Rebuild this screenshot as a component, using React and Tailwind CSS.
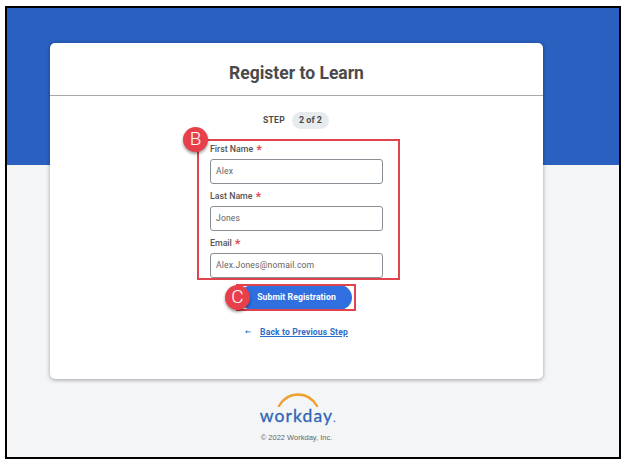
import React from 'react';

const Field = ({ label, value, className = '' }) => (
  <div className={className}>
    <label className="flex h-[13px] items-center pt-[2px] text-[8.8px] font-medium leading-none text-[#555]">
      {label}
      <span className="ml-[3px] text-[13px] leading-none text-[#de4b4f]">*</span>
    </label>
    <div className="mt-[4px] flex h-[25px] w-[173px] items-center rounded-[3px] border border-[#8a8f96] bg-white px-[5px] text-[8.6px] tracking-[0.15px] text-[#5f6368]">
      {value}
    </div>
  </div>
);

const App = () => {
  return (
    <div className="h-[463px] w-[625px] bg-white pl-[5px] pt-[6px] font-['Roboto',sans-serif]">
      <div className="h-[453px] w-[616px] border-2 border-black bg-[linear-gradient(#2a60bf_157px,#f4f5f7_157px)] pl-[43px] pt-[35px]">
        {/* Card */}
        <div className="relative h-[336px] w-[493px] rounded-[5px] bg-white shadow-[0_1px_4px_rgba(0,0,0,0.35)]">
          <div className="flex h-[53px] items-center justify-center border-b border-[#a9a9a9] pt-[8px] text-[17.5px] font-bold text-[#4a4a4a]">
            Register to Learn
          </div>

          <div className="flex h-[33px] items-center pl-[213px] pt-[16px]">
            <span className="text-[8.5px] font-bold tracking-[0.3px] text-[#4a4a4a]">STEP</span>
            <span className="ml-[7px] flex h-[17px] w-[37px] items-center justify-center rounded-full bg-[#e8ebee] text-[9px] font-bold text-[#4a4a4a]">
              2 of 2
            </span>
          </div>

          <div className="pl-[160px] pt-[13px]">
            <Field label="First Name" value="Alex" />
            <Field label="Last Name" value="Jones" className="mt-[5px]" />
            <Field label="Email" value="Alex.Jones@nomail.com" className="mt-[5px]" />

            <button className="ml-[30px] mt-[7px] flex h-[25px] w-[112px] items-center justify-center rounded-full bg-[#2f6fe0] pl-[1px] text-[8.6px] font-bold tracking-[0.1px] text-white">
              Submit Registration
            </button>

            <div className="ml-[35px] mt-[16px] flex items-center text-[8.6px] font-bold tracking-[0.15px] text-[#2f6cc9]">
              <span className="w-[15px] font-['DejaVu_Sans',sans-serif] text-[7px] text-[#2f6cc9]">←</span>
              <a className="underline" href="#back">Back to Previous Step</a>
            </div>
          </div>

          {/* Annotations */}
          <div className="absolute left-[147px] top-[96px] h-[141px] w-[203px] border-2 border-[#e0434b]" />
          <div className="absolute left-[186px] top-[241px] h-[27px] w-[120px] border-2 border-[#e0434b]" />
          <div className="absolute left-[133px] top-[84px] flex h-[25px] w-[25px] items-center justify-center rounded-full bg-[#e8404a] text-[19px] font-light text-white shadow-[0_2px_3px_rgba(0,0,0,0.4)]">
            B
          </div>
          <div className="absolute left-[175px] top-[242px] flex h-[25px] w-[25px] items-center justify-center rounded-full bg-[#e8404a] text-[19px] font-light text-white shadow-[0_2px_3px_rgba(0,0,0,0.4)]">
            C
          </div>
        </div>

        {/* Footer */}
        <div className="flex w-[493px] flex-col items-center pt-[14px]">
          <svg width="44" height="14" viewBox="0 0 44 14" fill="none" className="ml-[3px]">
            <path d="M3 13C8 4 14 1.500 22 1.500C30 1.500 36 4 41 13" stroke="#ee9f2d" strokeWidth="2.4" strokeLinecap="round" />
          </svg>
          <div className="-mt-[1px] h-[20px] pl-[2px] font-['Lato',sans-serif] text-[17.5px] leading-[20px] tracking-[1.1px] text-[#2f66b5] [-webkit-text-stroke:0.3px_#2f66b5]">
            workday<span className="text-[9px] tracking-normal">.</span>
          </div>
          <div className="mt-[6px] font-['Liberation_Sans',sans-serif] text-[7.5px] text-[#666]">© 2022 Workday, Inc.</div>
        </div>
      </div>
    </div>
  );
};

export default App;
